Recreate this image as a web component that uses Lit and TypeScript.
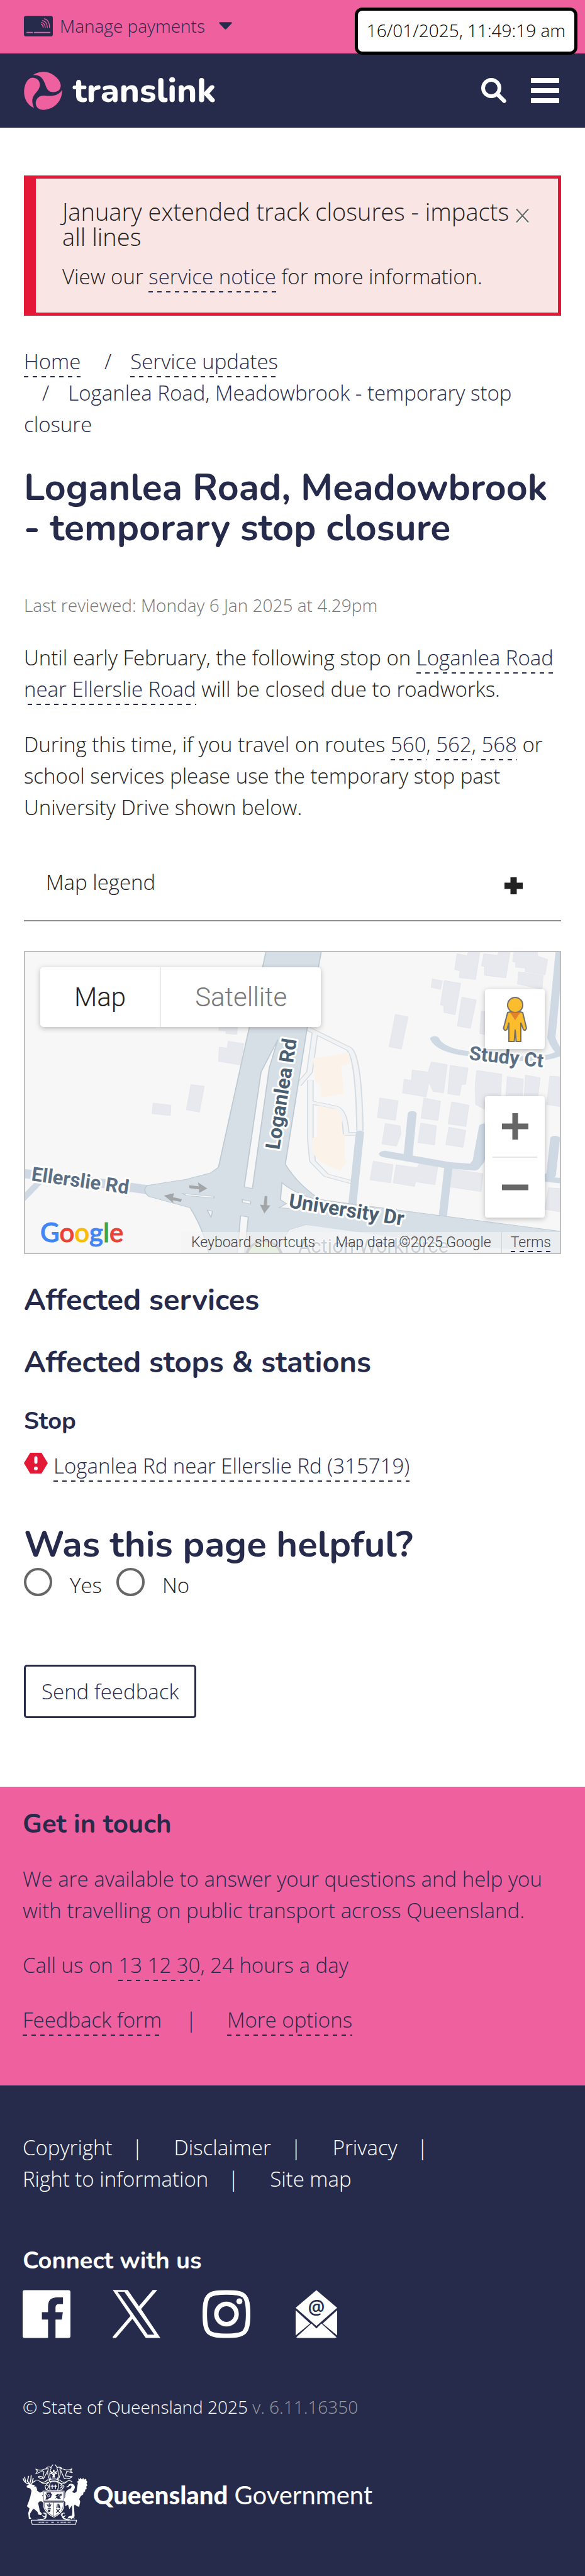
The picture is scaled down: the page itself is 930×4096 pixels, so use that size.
import { LitElement, html, svg, css } from "lit";
import { customElement, property } from "lit/decorators.js";

const cardIcon = html`<svg class="card" viewBox="42 27 173 123" aria-hidden="true">
  <rect x="42" y="27" width="173" height="123" rx="13" fill="#262b4c" />
  <g stroke="#ef609f" fill="none" stroke-linecap="round">
    <path d="M60 126.500H93M105 126.500H198" stroke-width="6.500" />
    <path d="M146 77Q157 82 157 96M147 66Q169 72 169.500 96M154 55Q181 63 182 96M164 44Q195 53 195 96" stroke-width="5" />
  </g>
</svg>`;

const logoMark = html`<svg class="mark" viewBox="35 350 233 233" aria-hidden="true">
  <g fill="#ef609f">
    <path d="M90 370C130 345 180 345 216 371C243 391 258 412 259 436C256 462 240 474 213 474C186 473 176 460 165 428C152 393 137 366 90 370Z" />
    <path d="M97 570C55 553 35 512 36 468C38 425 57 388 88 386C119 388 134 408 132 435C127 466 100 480 89 508C82 530 88 552 97 570Z" />
    <path d="M267 460C269 520 229 575 156 582C122 582 104 561 107 534C113 505 135 494 160 495C200 500 245 500 267 460Z" />
  </g>
</svg>`;

const searchIcon = html`<svg class="search" viewBox="0 0 40 40" aria-hidden="true">
  <circle cx="16" cy="16" r="13" fill="none" stroke="#fff" stroke-width="6" />
  <path d="M26 26L36.500 36.500" stroke="#fff" stroke-width="6.500" stroke-linecap="round" />
</svg>`;

const pegman = html`<svg class="pegman" viewBox="0 0 40 72" aria-hidden="true">
  <g fill="#fbbc2e" stroke="#707070" stroke-width="2">
    <path d="M8 25Q20 21 32 25L38 50Q36 55 33 52L29 41V71H21.500L20 52L18.500 71H10V41L7 52Q3 55 1.500 50Z" />
    <circle cx="20" cy="13" r="12" />
  </g>
  <path d="M12 25H28L20 37Z" fill="#e1822f" />
</svg>`;

const building = (d: string) => svg`<path d=${d} />`;

const houses = [
  "M1225 55L1252 66L1255 48L1286 50L1275 183L1231 174L1233 140L1219 134Z",
  "M1297 56L1334 64L1337 48L1367 48L1356 175L1299 162V118L1291 116Z",
  "M1378 48H1440L1442 68L1468 84L1461 160L1408 145V126L1382 122V98L1374 94Z",
  "M1390 145L1456 163L1453 232L1387 205Z",
  "M1159 180L1186 190L1181 232L1156 222Z",
  "M1191 188L1235 202L1220 357L1190 345V312L1181 308Z",
  "M1238 270L1277 284L1261 424L1226 413Z",
  "M1290 340L1305 344V455L1286 450Z",
  "M1060 355L1094 368L1076 527L1043 515Z",
  "M588 416H637L635 454L606 450V437L587 435Z",
  "M612 488L654 500L645 605L586 587L588 517L609 522Z",
  "M512 702L548 710L535 838L500 826Z",
  "M411 793L459 804L457 855L408 845Z",
  "M1156 590L1199 604L1189 744L1161 735L1150 690L1142 763L1079 743L1084 675L1103 682L1105 630L1148 640Z",
  "M1207 607L1255 620L1248 700L1237 703L1232 756L1200 747Z",
  "M1278 632L1345 650L1340 830L1300 825L1275 800L1274 700Z",
  "M1360 662L1403 675L1400 790L1355 780Z",
  "M1408 655L1448 668L1440 790L1405 780Z",
  "M1474 660L1500 663V810L1465 800Z",
  "M1018 768L1067 782L1060 878L1012 865Z",
  "M1136 768L1181 784L1174 879L1129 868Z",
  "M1211 787L1257 804L1249 909L1201 896Z",
  "M1033 894L1073 906L1075 945L1063 1006L1024 995Z",
  "M1128 892L1170 905L1165 1000L1120 988Z",
  "M1203 912L1249 928L1241 1012L1195 998Z",
  "M1001 1080L1054 1098L1047 1187L992 1172Z",
  "M1062 1098L1118 1113L1125 1088L1174 1104L1166 1196L1114 1182L1111 1205L1054 1187Z",
  "M1210 1118L1295 1142L1290 1230L1204 1207Z",
  "M1470 1212L1500 1215V1330L1460 1318Z",
];

/* The street map keeps its own coordinate grid; the group transform fits it to the panel. */
const streetMap = html`<svg class="streets" viewBox="0 0 850 478" preserveAspectRatio="xMidYMid slice" role="img" aria-label="Street map of Loganlea Road and University Drive">
  <rect width="850" height="478" fill="#f7f7f7" />
  <g transform="scale(.5933 .322) translate(-68 -48)">
    <g fill="#e8e9ef" stroke="#dfe1e9" stroke-width="1.500">${houses.map(building)}</g>
    <g fill="none" stroke="#d5dce2" stroke-width="26" stroke-linejoin="round">
      <path d="M825 425L935 525Q962 560 965 930" stroke-width="20" />
      <path d="M845 440L830 640L800 705" stroke-width="18" />
      <path d="M832 680V970L838 1080L875 1150L945 1185" stroke-width="18" />
      <path d="M835 790L900 815Q925 830 928 945H960" stroke-width="18" />
    </g>
    <g fill="none" stroke="#f1f3f4" stroke-linejoin="round">
      <path d="M825 425L935 525Q962 560 965 930" stroke-width="13" />
      <path d="M845 440L830 640L800 705" stroke-width="12" />
      <path d="M832 680V970L838 1080L875 1150L945 1185" stroke-width="12" />
      <path d="M835 790L900 815Q925 830 928 945H960" stroke-width="12" />
    </g>
    <g fill="#fbf3e9">
      <path d="M839 572L936 545L938 600L915 606L923 748L860 765L858 700L846 690Z" />
      <path d="M852 805L905 825L918 865L915 945L925 950L924 1060L930 1080L912 1130L860 1085L838 1040V965L850 960Z" />
    </g>
    <g fill="none" stroke="#ced9e4" stroke-linecap="round" stroke-linejoin="round">
      <path d="M1165 475Q1180 535 1260 550Q1460 600 1500 545" stroke-width="24" />
      <path d="M1500 48L1478 470Q1490 540 1520 570" stroke-width="22" />
      <path d="M1105 845L1094 1055" stroke-width="24" />
      <path d="M1032 1045L1200 1100L1270 1110L1283 1080L1300 910" stroke-width="32" />
      <path d="M1202 1110L1186 1370" stroke-width="22" />
      <path d="M965 940L945 1290" stroke-width="22" />
      <path d="M1488 968L1477 1150L1440 1165L1520 1180" stroke-width="26" />
      <path d="M60 1140L180 1165L400 1222" stroke-width="44" />
      <path d="M60 1270L110 1175" stroke-width="20" />
    </g>
    <g fill="#d7dfe6" stroke="#bdcad3" stroke-width="3">
      <path d="M714 40H862L823 430L765 1095Q800 1200 860 1270L1100 1330L1510 1428V1540H1160L820 1395L775 1420L740 1545H560Q550 1430 510 1310L400 1255Q380 1225 395 1200L500 1170L565 1138L586 1110Z" />
    </g>
    <path d="M1060 1370L1510 1490V1540H1160L1060 1480Z" fill="#d7dfe6" />
    <g fill="#f7f7f7" stroke="#bdcad3" stroke-width="3">
      <path d="M745 480L722 620L677 1215L655 1208L700 640Z" />
      <path d="M650 1270L672 1278V1292L650 1284Z" />
      <path d="M645 1350L666 1356L655 1545H636Z" />
      <path d="M756 1186Q790 1240 850 1270L1000 1310L1000 1345L790 1315L748 1310L768 1290L752 1270Z" />
      <path d="M490 1240L574 1254V1262L500 1250Z" />
      <path d="M556 1322L570 1328L566 1358Z" />
    </g>
    <path d="M820 1395L1160 1482L1500 1535V1545H740L775 1420Z" fill="#edf1f4" />
    <g fill="#a3a6a8">
      <path d="M508 1199L533 1204L531 1185L556 1215L534 1237V1219L508 1213Z" />
      <path d="M440 1250L467 1238L464 1258L488 1268L485 1281L463 1273L466 1288Z" />
      <path d="M710 1252H717L716 1298L725 1299L709 1338L697 1295L707 1297Z" />
    </g>
    <ellipse cx="708" cy="1560" rx="48" ry="86" fill="#cfe5bd" stroke="#8f9296" stroke-width="8" />
  </g>
  <g class="roadnames">
    <text transform="translate(404 315) rotate(-81)" class="major">Loganlea Rd</text>
    <text transform="translate(418 406) rotate(9)" class="major">University Dr</text>
    <text transform="translate(9 363) rotate(8)">Ellerslie Rd</text>
    <text transform="translate(705 171) rotate(6)">Study Ct</text>
    <text x="434" y="478" class="place">Action Workforce</text>
  </g>
</svg>`;

const facebook = html`<svg class="sq" viewBox="15 30 288 288"><path fill="#fff" d="M27 30H291Q303 30 303 42V306Q303 318 291 318H213V207H251L257 163H213V135Q213 114 232 114H258V74H222Q168 74 168 128V163H131V207H168V318H27Q15 318 15 306V42Q15 30 27 30Z" /></svg>`;
const xIcon = html`<svg class="sq" viewBox="554 26 294 298"><path fill="#fff" fill-rule="evenodd" d="M555 27H647L716 127L801 27H829L729 144L848 322H758L676 204L575 322H555V314L664 187ZM584 38L770 302H811L626 38Z" /></svg>`;
const instagram = html`<svg class="sq" viewBox="1108 30 288 288"><g fill="none" stroke="#fff" stroke-width="27">
  <path d="M1252 43.500C1360 43.500 1382.500 55 1382.500 174S1360 304.500 1252 304.500S1121.500 293 1121.500 174S1144 43.500 1252 43.500Z" />
  <circle cx="1252" cy="174" r="61" /></g><circle cx="1330" cy="97" r="18" fill="#fff" /></svg>`;
const mail = html`<svg class="sq" viewBox="-5 0 76 76">
  <g fill="#fff"><path d="M33 0L66 28L33 57L0 28Z" /><path d="M0 32L23 53L0 72Z" /><path d="M66 32L43 53L66 72Z" /><path d="M25 53L33 61L41 53L65 75L63 76H3L1 75Z" /></g>
  <text x="33" y="37" text-anchor="middle">@</text></svg>`;

const crest = html`<svg class="crest" viewBox="54 79 394 368" role="img" aria-label="Queensland coat of arms">
  <g fill="none" stroke="#fff" stroke-width="4.500" stroke-linejoin="round" stroke-linecap="round">
    <path d="M238 82L226 98M252 82L264 98M226 98Q205 88 193 108L210 106Q200 140 218 172M264 98Q285 92 295 108L280 106Q290 140 270 172M228 100Q212 140 224 168M262 100Q278 140 266 168" />
    <path d="M186 108Q160 120 134 108L144 120L134 136Q160 128 172 118L184 125L176 160Q160 145 148 156L160 164L180 168L206 120M302 108Q325 120 354 106L346 120L356 130L322 122L314 150L356 154Q335 172 308 166L286 118" />
    <path d="M134 176Q150 172 160 184Q180 198 208 172L218 178M162 184Q180 205 212 188M354 184Q335 172 322 184Q300 198 280 174L268 178M322 186Q300 206 274 188" />
    <path d="M218 172Q244 164 270 172V184Q244 176 218 184ZM212 190L190 212L196 232L216 238M274 190L306 212L292 234L270 238M202 206L216 214L204 226M284 206L296 216L282 224" />
    <path d="M222 188Q244 180 268 188Q276 212 266 238H222Q212 212 222 188Z" />
    <path d="M234 204V228M254 204V228M226 212H242M246 212H262" />
    <path d="M57 166Q64 192 88 198M66 158L72 182M90 152L84 178L94 202M106 148L104 172L96 200M130 180L112 192L98 206M118 164L112 190M82 180L88 190" stroke-width="6" />
    <path d="M178 376Q196 372 200 386L186 410Q170 420 146 412M176 390Q178 402 192 396M308 376Q290 374 288 386Q300 412 340 416M312 390Q308 402 296 396M186 376Q220 416 150 414M300 376Q278 410 336 420" />
    <path d="M106 419H382L376 444H112Z" />
  </g>
  <g fill="#fff">
    <path d="M78 210Q90 204 102 198L116 204L128 206L124 213L136 214L142 232L140 238L160 252L176 244L178 262L172 268L186 288L180 300L182 315L170 304L156 305L148 316L154 340L158 364L172 380L166 388L150 384L144 368L128 354L118 350L100 378L98 396L106 410L92 411L88 376L96 348L80 334L90 308L100 278L108 240L100 226L80 220Z" />
    <path d="M315 219L330 210Q335 196 352 197Q370 200 372 218Q368 240 354 246Q368 260 382 246Q386 210 390 196L386 184L394 180L392 164L402 170L406 160L414 172L422 162L428 172L440 166L442 180L448 186L442 196L448 206L440 216L444 226L434 234L434 244L424 250L422 262L408 272L398 290L404 306L398 338L384 334L372 324L366 330L370 396L362 400L372 408L358 406L348 414L346 406L326 408L334 396L354 390L356 370L354 328L338 352L330 324L312 334L314 310L296 292Q316 288 312 270Q310 238 346 226Q356 214 348 208Q338 210 330 218Z" />
    <path d="M176 240H308V304H176ZM180 308H306V330Q308 370 244 404Q180 370 180 330Z" />
    <path d="M238 112H248V124L264 118L258 130L266 140L254 138L248 144L252 160H234L238 144L230 138L220 140L226 130L220 118L238 124Z" />
  </g>
  <g fill="none" stroke="#262b4c" stroke-width="2.500">
    <path d="M181 245H303V300H181ZM185 312V330Q188 366 244 398Q300 366 301 330V312ZM243 308V400M228 120L256 140M258 120L230 140" />
  </g>
  <g fill="#262b4c">
    <path d="M192 260L202 268L198 252L224 250L230 262L236 258L228 272Q230 284 214 286L206 294H192L198 280ZM252 268L266 260H280L292 258L290 272L276 276L288 290H270L262 284L250 288L262 276Z" />
    <path d="M199 318L209 340H221L230 318L222 326L216 312L208 326ZM206 346H226V352H206ZM208 356H224L220 368H210ZM258 346L264 318H276L284 348Z" />
  </g>
  <g fill="none" stroke="#fff" stroke-width="3"><path d="M214 316V340M268 316V346" /><circle cx="212" cy="270" r="7" /><path d="M268 274Q276 256 286 270" /></g>
  <circle cx="269" cy="361" r="18" fill="#fff" />
  <path d="M258 350L280 374M280 350L258 374" stroke="#262b4c" stroke-width="5" />
  <path d="M146 432H210M228 432H246M266 432H346" stroke="#fff" stroke-width="8" stroke-dasharray="3 4" />
</svg>`;

const base = css`
  * { box-sizing: border-box; }
  h1, h2, h3, p, ul, ol, fieldset { margin: 0; padding: 0; border: 0; }
  ul, ol { list-style: none; }
  svg { display: block; }
  button { font: inherit; color: inherit; background: none; border: 0; padding: 0; margin: 0; cursor: pointer; }
  h1, h2, h3 { font-family: Nunito, Lato, sans-serif; font-weight: 700; color: #262b4c; }
  .link {
    color: #262b4c;
    text-decoration: none;
    padding-bottom: 3px;
    background: repeating-linear-gradient(90deg, #262b4c 0 7px, transparent 7px 14px) left bottom / 100% 2px no-repeat;
  }
`;

@customElement("site-header")
export class SiteHeader extends LitElement {
  @property() stamp = "";
  static styles = [base, css`
    :host { display: block; position: relative; }
    .utility { height: 85px; padding: 20px 38px 0; background: #ef609f; color: #262b4c; font-size: 28px; line-height: 42px; }
    .pay { display: flex; align-items: center; gap: 11px; }
    .card { width: 46px; height: 33px; }
    .caret { width: 21px; height: 12px; margin-left: 11px; }
    .bar { height: 118px; padding: 0 41px 0 38px; background: #262b4c; display: flex; align-items: center; }
    .brand { display: flex; align-items: center; gap: 17px; margin-right: auto; color: #fff; text-decoration: none; font: 800 54px/60px Nunito, Lato, sans-serif; }
    .mark { width: 61px; height: 61px; }
    .tools { display: flex; align-items: center; gap: 39px; }
    .search { width: 40px; height: 40px; }
    .menu { display: grid; gap: 8px; width: 45px; }
    .menu i { height: 8px; border-radius: 1px; background: #fff; }
    .stamp { position: absolute; top: 12px; right: 12px; padding: 10px 14px 13px; border: 5px solid #000; border-radius: 12px; background: #fff; color: #000; font-size: 28px; line-height: 42px; white-space: nowrap; }
  `];
  render() {
    return html`
      <div class="utility">
        <button class="pay">${cardIcon}<span>Manage payments</span>
          <svg class="caret" viewBox="0 0 84 47" aria-hidden="true"><path fill="#262b4c" d="M5 0H79Q86 2 81 8L48 43Q42 49 36 43L3 8Q-2 2 5 0Z" /></svg>
        </button>
      </div>
      <header class="bar">
        <a class="brand" href="#">${logoMark}<span>translink</span></a>
        <div class="tools">
          <button aria-label="Search">${searchIcon}</button>
          <button class="menu" aria-label="Menu"><i></i><i></i><i></i></button>
        </div>
      </header>
      <time class="stamp">${this.stamp}</time>`;
  }
}

@customElement("stop-map")
export class StopMap extends LitElement {
  static styles = [base, css`
    :host { display: block; position: relative; height: 482px; border: 2px solid #bfbfbf; overflow: hidden; font-family: Roboto, sans-serif; font-weight: 300; }
    .streets { width: 100%; height: 100%; }
    .roadnames { font: 700 31px Roboto, sans-serif; fill: #5b7085; stroke: #fff; stroke-width: 6px; paint-order: stroke; stroke-linejoin: round; }
    .major { font-size: 32px; fill: #4b5f73; }
    .place { fill: #7d90a0; stroke-width: 3px; font-weight: 400; }
    .types { position: absolute; top: 24px; left: 24px; display: flex; background: #fff; border-radius: 5px; box-shadow: 0 2px 8px rgba(0, 0, 0, .25); font-size: 42px; line-height: 95px; }
    .types button { padding: 0 54px; color: #222; }
    .types button + button { border-left: 2px solid #ebebeb; color: #777; }
    .side { position: absolute; right: 24px; background: #fff; width: 95px; box-shadow: 0 2px 8px rgba(0, 0, 0, .25); border-radius: 4px; }
    .view { top: 59px; height: 95px; display: grid; place-items: center; }
    .pegman { width: 40px; height: 72px; }
    .zoom { top: 229px; height: 193px; display: grid; grid-template-rows: 1fr 2px 1fr; justify-items: center; align-items: center; }
    .zoom hr { width: 71px; height: 2px; border: 0; margin: 0; background: #e6e6e6; }
    .zoom svg { width: 42px; height: 42px; }
    .google { position: absolute; left: 24px; bottom: 9px; font: 500 42px/48px Lato, sans-serif; -webkit-text-stroke: 1px currentColor; }
    .b { color: #4285f4; } .r { color: #ea4335; } .y { color: #fbbc05; } .g { color: #34a853; }
    .legal { position: absolute; right: 0; bottom: 0; display: flex; height: 33px; background: rgba(245, 245, 245, .65); font-size: 23px; line-height: 33px; color: #444; white-space: nowrap; }
    .legal > * { padding: 0 16px; }
    .legal > :last-child { border-left: 1px solid #cfd4d8; padding: 0 14px; }
    .legal .link { padding-bottom: 2px; color: #444; }
  `];
  render() {
    return html`${streetMap}
      <div class="types"><button>Map</button><button>Satellite</button></div>
      <button class="side view" aria-label="Street View">${pegman}</button>
      <div class="side zoom">
        <button aria-label="Zoom in"><svg viewBox="0 0 42 42"><path d="M21 0V42M0 21H42" stroke="#666" stroke-width="9" /></svg></button>
        <hr />
        <button aria-label="Zoom out"><svg viewBox="0 0 42 42"><path d="M0 21H42" stroke="#666" stroke-width="9" /></svg></button>
      </div>
      <div class="google" aria-label="Google"><span class="b">G</span><span class="r">o</span><span class="y">o</span><span class="b">g</span><span class="g">l</span><span class="r">e</span></div>
      <div class="legal"><button>Keyboard shortcuts</button><span>Map data ©2025 Google</span><span><a class="link" href="#">Terms</a></span></div>`;
  }
}

@customElement("site-footer")
export class SiteFooter extends LitElement {
  static styles = [base, css`
    :host { display: block; font-size: 33px; line-height: 50px; }
    .touch { padding: 35px 36px 79px; background: #ef609f; color: #262b4c; display: grid; gap: 37px; }
    .touch h2 { font-size: 42px; line-height: 50px; }
    .touch .sep { margin: 0 48px 0 38px; }
    .base { padding: 74px 36px 81px; background: #262b4c; color: #fff; }
    .links { display: flex; flex-wrap: wrap; max-width: 760px; }
    .links a { color: #fff; text-decoration: none; }
    .links .item { white-space: nowrap; }
    .links .sep { margin: 0 49px 0 31px; }
    .connect { margin-top: 82px; color: #fff; font-size: 38px; line-height: 46px; }
    .social { display: flex; align-items: center; gap: 67px; margin-top: 23px; }
    .sq { width: 76px; height: 77px; }
    .sq text { font: 600 30px "Open Sans", sans-serif; fill: #262b4c; }
    .rights { margin-top: 88px; font-size: 28px; line-height: 42px; }
    .rights span { color: #9a9a9a; }
    .gov { display: flex; align-items: center; gap: 9px; margin-top: 70px; color: #fff; text-decoration: none; font: 400 40px/48px Lato, sans-serif; }
    .gov b { font-weight: 900; }
    .crest { width: 103px; height: 97px; }
  `];
  render() {
    const links = ["Copyright", "Disclaimer", "Privacy", "Right to information", "Site map"];
    return html`
      <section class="touch">
        <h2>Get in touch</h2>
        <p>We are available to answer your questions and help you with travelling on public transport across Queensland.</p>
        <p>Call us on <a class="link" href="#">13 12 30</a>, 24 hours a day</p>
        <p><a class="link" href="#">Feedback form</a><span class="sep">|</span><a class="link" href="#">More options</a></p>
      </section>
      <footer class="base">
        <ul class="links">${links.map((l, i) => html`<li class="item"><a href="#">${l}</a>${i < links.length - 1 ? html`<span class="sep">|</span>` : ""}</li>`)}</ul>
        <h3 class="connect">Connect with us</h3>
        <div class="social">
          <a href="#" aria-label="Facebook">${facebook}</a>
          <a href="#" aria-label="X">${xIcon}</a>
          <a href="#" aria-label="Instagram">${instagram}</a>
          <a href="#" aria-label="Email">${mail}</a>
        </div>
        <p class="rights">© State of Queensland 2025 <span>v. 6.11.16350</span></p>
        <a class="gov" href="#">${crest}<span><b>Queensland</b> Government</span></a>
      </footer>`;
  }
}

@customElement("app-root")
export class AppRoot extends LitElement {
  static styles = [base, css`
    :host { display: block; background: #fff; color: #222; font: 300 33px/50px "Open Sans", sans-serif; }
    .main { padding: 76px 38px 109px; }
    .alert { display: flex; gap: 8px; padding: 32px 46px 32px 42px; border: 5px solid #e31837; border-left-width: 19px; background: #f9e5e4; }
    .alert .body { flex: 1; }
    .alert h2 { font: 300 38px/40px "Open Sans", sans-serif; color: #222; margin-bottom: 19px; }
    .close { align-self: flex-start; margin-top: 15px; }
    .close svg { width: 21px; height: 24px; filter: drop-shadow(0 2px 0 #fff); }
    .crumbs { margin-top: 48px; color: #262b4c; }
    .crumbs li { display: inline-block; }
    .crumbs .sep { margin: 0 30px 0 29px; }
    h1, .helpful h2 { font-size: 58px; line-height: 64px; }
    h1 { margin-top: 44px; font-size: 59px; }
    .reviewed { margin-top: 69px; font-size: 28px; line-height: 42px; color: #757575; }
    .copy p { margin-top: 38px; }
    .legend { display: flex; align-items: center; justify-content: space-between; width: 100%; margin-top: 32px; padding: 37px 59px 35px 35px; border-bottom: 2px solid #8f8f8f; text-align: left; }
    .plus { width: 33px; height: 31px; margin-top: 10px; }
    stop-map { margin: 47px 0 45px; }
    .section { font-size: 47px; line-height: 57px; margin-bottom: 42px; }
    .kind { font-size: 38px; line-height: 46px; margin-bottom: 23px; }
    .stop { display: flex; gap: 9px; }
    .hex { width: 38px; height: 33px; margin-top: 4px; }
    .helpful { margin-top: 68px; }
    .choices { display: flex; gap: 23px; margin-top: 5px; }
    .choice { display: flex; gap: 28px; }
    .choice label { padding-top: 3px; }
    .choice input { appearance: none; width: 45px; height: 45px; margin: 0; border: 4px solid #666; border-radius: 50%; background: #fff; }
    .send { margin-top: 101px; height: 85px; padding: 0 25px; border: 3px solid #262b4c; border-radius: 5px; color: #262b4c; }
  `];
  render() {
    return html`
      <site-header stamp="16/01/2025, 11:49:19 am"></site-header>
      <main class="main">
        <section class="alert">
          <div class="body">
            <h2>January extended track closures - impacts all lines</h2>
            <p>View our <a class="link" href="#">service notice</a> for more information.</p>
          </div>
          <button class="close" aria-label="Close"><svg viewBox="0 0 21 24"><path d="M1 1.500L20 22.500M20 1.500L1 22.500" stroke="#666" stroke-width="2" /></svg></button>
        </section>
        <nav aria-label="Breadcrumb"><ol class="crumbs">
          <li><a class="link" href="#">Home</a></li>
          <li><span class="sep">/</span><a class="link" href="#">Service updates</a></li>
          <li><span class="sep">/</span>Loganlea Road, Meadowbrook - temporary stop closure</li>
        </ol></nav>
        <h1>Loganlea Road, Meadowbrook - temporary stop closure</h1>
        <p class="reviewed">Last reviewed: Monday 6 Jan 2025 at 4.29pm</p>
        <div class="copy">
          <p>Until early February, the following stop on <a class="link" href="#">Loganlea Road near Ellerslie Road</a> will be closed due to roadworks.</p>
          <p>During this time, if you travel on routes <a class="link" href="#">560</a>, <a class="link" href="#">562</a>, <a class="link" href="#">568</a> or school services please use the temporary stop past University Drive shown below.</p>
        </div>
        <button class="legend"><span>Map legend</span>
          <svg class="plus" viewBox="0 0 33 31" aria-hidden="true"><path d="M16.500 2V29M2 15.500H31" stroke="#222" stroke-width="10" stroke-linejoin="round" /></svg>
        </button>
        <stop-map></stop-map>
        <h2 class="section">Affected services</h2>
        <h2 class="section">Affected stops &amp; stations</h2>
        <h3 class="kind">Stop</h3>
        <p class="stop">
          <svg class="hex" viewBox="0 0 38 33" aria-hidden="true"><path d="M10 0H28L38 16.500L28 33H10L0 16.500Z" fill="#e31837" /><path d="M19 8V15" stroke="#fff" stroke-width="5" stroke-linecap="round" /><circle cx="19" cy="25" r="3" fill="#fff" /></svg>
          <span><a class="link" href="#">Loganlea Rd near Ellerslie Rd (315719)</a></span>
        </p>
        <form class="helpful" @submit=${(e: Event) => e.preventDefault()}>
          <h2>Was this page helpful?</h2>
          <div class="choices">
            <div class="choice"><input type="radio" id="yes" name="helpful" value="yes" /><label for="yes">Yes</label></div>
            <div class="choice"><input type="radio" id="no" name="helpful" value="no" /><label for="no">No</label></div>
          </div>
          <button class="send">Send feedback</button>
        </form>
      </main>
      <site-footer></site-footer>`;
  }
}
